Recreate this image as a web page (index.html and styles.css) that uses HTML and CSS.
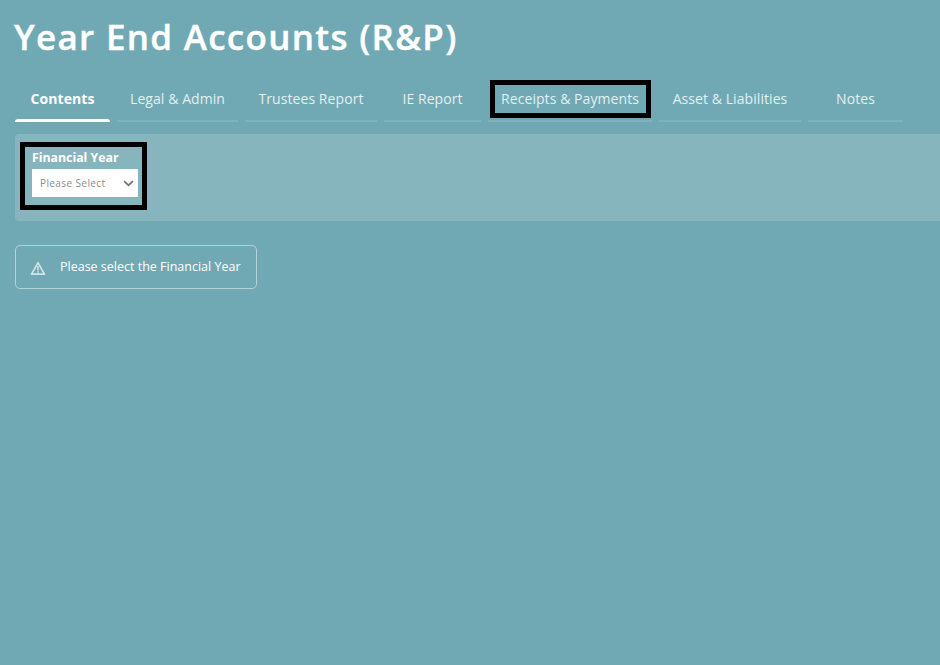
FILE: index.html
```html
<!DOCTYPE html>
<html lang="en">
<head>
  <meta charset="UTF-8">
  <title>Year End Accounts (R&amp;P)</title>
  <link rel="stylesheet" href="styles.css">
</head>
<body>

<h1>Year End Accounts (R&amp;P)</h1>

<nav class="tabs">
  <a class="tab active">Contents</a>
  <a class="tab">Legal &amp; Admin</a>
  <a class="tab">Trustees Report</a>
  <a class="tab">IE Report</a>
  <a class="tab marked">Receipts &amp; Payments</a>
  <a class="tab">Asset &amp; Liabilities</a>
  <a class="tab">Notes</a>
</nav>

<div class="filter">
  <div class="field">
    <div class="label">Financial Year</div>
    <div class="select">
      <span>Please Select</span>
      <svg width="11" height="7" viewBox="0 0 11 7"><path d="M1 1.2l4.5 4 4.5-4" fill="none" stroke="#757575" stroke-width="1.8"/></svg>
    </div>
  </div>
</div>

<div class="notice">
  <svg width="16" height="15" viewBox="0 0 16 15" fill="none" stroke="#d0e3e7" stroke-linejoin="round">
    <path d="M8 1.6L14.4 13.2H1.6z" stroke-width="1.7"/>
    <path d="M8 5v4.4M8 10.3v1.5" stroke-width="1.5"/>
  </svg>
  <span>Please select the Financial Year</span>
</div>

</body>
</html>
```
FILE: styles.css
```css
body {
  background: #70a9b4;
  color: white;
  font-family: 'Open Sans', sans-serif;
  margin: 0;
  padding: 13px 0 0 15px;
  height: 665px;
  box-sizing: border-box;
  overflow: hidden;
}
h1 {
  margin: 0 0 0 -1px;
  font-size: 35px;
  line-height: 48px;
  font-weight: 600;
  letter-spacing: 1.3px;
  -webkit-text-stroke: 0.4px white;
  white-space: nowrap;
}
.tabs {
  display: grid;
  grid-template-columns: 95px 121px 132px 97px 164px 142px 95px;
  column-gap: 7px;
  margin-top: 18px;
  height: 43px;
}
.tab {
  position: relative;
  box-sizing: border-box;
  border-bottom: 2px solid #80b2bc;
  font-size: 14px;
  line-height: 40px;
  letter-spacing: 0.07px;
  text-align: center;
  white-space: nowrap;
  color: #e3eff1;
}
.tab.active {
  border-bottom: 0;
  font-weight: 700;
  color: white;
}
.tab.active::after {
  content: "";
  display: block;
  height: 3px;
  background: white;
  border-radius: 3px 3px 0 0;
}
/* black frame drawn over the tab */
.marked::after {
  content: "";
  position: absolute;
  left: 2px;
  top: 1px;
  width: 161px;
  height: 38px;
  box-sizing: border-box;
  border: 5px solid black;
}
.filter {
  margin-top: 12px;
  height: 87px;
  box-sizing: border-box;
  padding: 8px 0 0 5px;
  background: #87b5be;
  border-radius: 4px 0 0 4px;
}
.field {
  width: 127px;
  height: 68px;
  box-sizing: border-box;
  border: 5px solid black;
  padding: 1px 4px 0 7px;
}
.label {
  font-size: 12.3px;
  line-height: 20px;
  font-weight: 700;
  white-space: nowrap;
}
.select {
  display: flex;
  align-items: center;
  justify-content: space-between;
  width: 106px;
  height: 28px;
  margin-top: 1px;
  box-sizing: border-box;
  padding: 0 4px 0 8px;
  background: white;
  color: #8b8b8b;
  font-size: 10px;
  letter-spacing: 0.4px;
  white-space: nowrap;
}
.notice {
  display: flex;
  align-items: center;
  width: 242px;
  height: 44px;
  margin-top: 24px;
  box-sizing: border-box;
  padding-left: 14px;
  border: 1px solid #b5d2d8;
  border-radius: 5px;
  font-size: 12.5px;
  white-space: nowrap;
}
.notice span {
  margin-top: -2px;
}
.notice svg {
  margin: 2px 14px 0 0;
}
```
